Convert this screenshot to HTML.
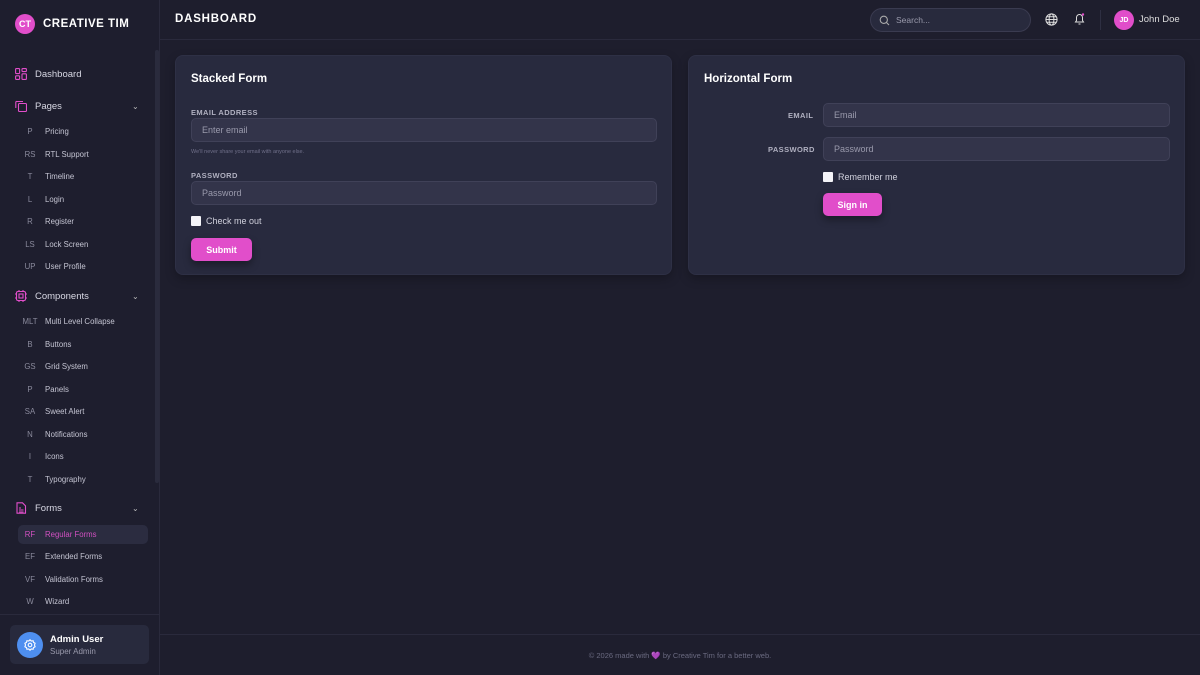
<!DOCTYPE html>
<html><head><meta charset="utf-8"><style>
*{box-sizing:border-box;margin:0;padding:0}
body{width:1200px;height:675px;overflow:hidden;background:#1e1e2d;font-family:"Liberation Sans",sans-serif;color:#e8e8f0;position:relative}
.sb{position:absolute;left:0;top:0;width:160px;height:675px;background:#1e1e2e;border-right:1px solid #2a2a3c}
.logo{position:absolute;left:15px;top:14px;display:flex;align-items:center}
.lc{width:20px;height:20px;border-radius:50%;background:#e14eca;color:#fff;font-size:9px;font-weight:bold;display:flex;align-items:center;justify-content:center}
.lt{margin-left:8px;font-size:11.5px;font-weight:bold;letter-spacing:.5px;color:#fff}
.sc{position:absolute;left:155px;top:50px;width:4px;height:433px;background:#2a2b3d;border-radius:2px}
.it{position:absolute;left:0;width:150px;font-size:9.5px;color:#d8d8e4;display:flex;align-items:center}
.it svg{position:absolute;left:15px}
.it .t{position:absolute;left:35px}
.it .ch{position:absolute;left:132px;font-size:8px;color:#bbb}
.sub{position:absolute;left:18px;width:130px;height:19px;font-size:7.8px;color:#c4c4d2;display:flex;align-items:center;border-radius:5px}
.sub .a{width:24px;text-align:center;color:#8a8a9c}
.sub .b{position:absolute;left:27px}
.sub.on{background:#2b2c40}
.sub.on .a,.sub.on .b{color:#d050c0}
.sf{position:absolute;left:0;top:614px;width:159px;border-top:1px solid #2a2a3c}
.adm{position:absolute;left:10px;top:625px;width:139px;height:39px;background:#282a3d;border-radius:5px}
.av{position:absolute;left:7px;top:7px;width:26px;height:26px;border-radius:50%;background:#4e8ff0;display:flex;align-items:center;justify-content:center}
.hd{position:absolute;left:160px;top:0;width:1040px;height:40px;border-bottom:1px solid #2a2a3c}
.card{position:absolute;top:55px;height:220px;background:#282a3e;border-radius:8px;border:1px solid #2e3045;box-shadow:0 4px 10px rgba(0,0,0,.25)}
.ct{position:absolute;left:15px;top:17px;font-size:11.5px;font-weight:bold;color:#fff}
.lb{position:absolute;font-size:7.5px;font-weight:bold;color:#b0b0c0;letter-spacing:.4px}
.in{position:absolute;height:24px;background:#33344a;border:1px solid #404158;border-radius:5px;font-size:9px;color:#9a9aac;padding-left:10px;display:flex;align-items:center}
.cb{position:absolute;width:10px;height:10px;background:#f4f4f8;border-radius:1px}
.ctx{position:absolute;font-size:9px;color:#d0d0dc}
.btn{position:absolute;height:23px;background:#e14eca;border-radius:5px;color:#fff;font-size:9px;font-weight:bold;display:flex;align-items:center;justify-content:center;box-shadow:0 4px 8px rgba(0,0,0,.35)}
</style></head><body>
<div class="sb">
<div class="logo"><div class="lc">CT</div><div class="lt">CREATIVE TIM</div></div>
<div class="sc"></div>
<div class="it" style="top:67px;height:14px"><svg width="12" height="12" viewBox="0 0 12 12" fill="none" stroke="#e14eca" stroke-width="1.1"><rect x=".6" y=".6" width="4" height="5" rx=".8"/><rect x="7" y=".6" width="4.4" height="3" rx=".8"/><rect x=".6" y="7.8" width="4" height="3.6" rx=".8"/><rect x="7" y="5.8" width="4.4" height="5.6" rx=".8"/></svg><span class="t">Dashboard</span></div>
<div class="it" style="top:99px;height:14px"><svg width="12" height="12" viewBox="0 0 12 12" fill="none" stroke="#e14eca" stroke-width="1.1"><rect x="3.5" y="3.5" width="8" height="8" rx="1"/><path d="M8 1.5H2A.8.8 0 0 0 .8 2.3V8"/></svg><span class="t">Pages</span><span class="ch">⌄</span></div>
<div class="sub" style="top:122px"><span class="a">P</span><span class="b">Pricing</span></div>
<div class="sub" style="top:145px"><span class="a">RS</span><span class="b">RTL Support</span></div>
<div class="sub" style="top:167px"><span class="a">T</span><span class="b">Timeline</span></div>
<div class="sub" style="top:190px"><span class="a">L</span><span class="b">Login</span></div>
<div class="sub" style="top:212px"><span class="a">R</span><span class="b">Register</span></div>
<div class="sub" style="top:235px"><span class="a">LS</span><span class="b">Lock Screen</span></div>
<div class="sub" style="top:257px"><span class="a">UP</span><span class="b">User Profile</span></div>
<div class="it" style="top:289px;height:14px"><svg width="12" height="12" viewBox="0 0 12 12" fill="none" stroke="#e14eca" stroke-width="1.1"><rect x="1.5" y="1.5" width="9" height="9" rx="1.5"/><rect x="4" y="4" width="4" height="4"/><path d="M4 0v1.5M8 0v1.5M4 10.5V12M8 10.5V12M0 4h1.5M0 8h1.5M10.5 4H12M10.5 8H12"/></svg><span class="t">Components</span><span class="ch">⌄</span></div>
<div class="sub" style="top:312px"><span class="a">MLT</span><span class="b">Multi Level Collapse</span></div>
<div class="sub" style="top:335px"><span class="a">B</span><span class="b">Buttons</span></div>
<div class="sub" style="top:357px"><span class="a">GS</span><span class="b">Grid System</span></div>
<div class="sub" style="top:380px"><span class="a">P</span><span class="b">Panels</span></div>
<div class="sub" style="top:402px"><span class="a">SA</span><span class="b">Sweet Alert</span></div>
<div class="sub" style="top:425px"><span class="a">N</span><span class="b">Notifications</span></div>
<div class="sub" style="top:447px"><span class="a">I</span><span class="b">Icons</span></div>
<div class="sub" style="top:470px"><span class="a">T</span><span class="b">Typography</span></div>
<div class="it" style="top:501px;height:14px"><svg width="12" height="12" viewBox="0 0 12 12" fill="none" stroke="#e14eca" stroke-width="1.1"><path d="M2 .8h5.5L10.5 3.8V11.2H2z"/><path d="M4 6h2M4 8h4.5M4 10h4.5"/></svg><span class="t">Forms</span><span class="ch">⌄</span></div>
<div class="sub on" style="top:525px"><span class="a">RF</span><span class="b">Regular Forms</span></div>
<div class="sub" style="top:547px"><span class="a">EF</span><span class="b">Extended Forms</span></div>
<div class="sub" style="top:570px"><span class="a">VF</span><span class="b">Validation Forms</span></div>
<div class="sub" style="top:592px"><span class="a">W</span><span class="b">Wizard</span></div>
<div class="sf"></div>
<div class="adm"><div class="av"><svg width="12" height="12" viewBox="0 0 12 12" fill="none" stroke="#fff" stroke-width="1.1"><circle cx="6" cy="6" r="1.8"/><path d="M6 .8l1.3 1.2 1.8-.3.4 1.7 1.6.9-.6 1.7.6 1.7-1.6.9-.4 1.7-1.8-.3L6 11.2 4.7 10l-1.8.3-.4-1.7-1.6-.9.6-1.7-.6-1.7 1.6-.9.4-1.7 1.8.3z"/></svg></div>
<div style="position:absolute;left:40px;top:9px;font-size:9.5px;font-weight:bold;color:#fff">Admin User</div>
<div style="position:absolute;left:40px;top:22px;font-size:8px;color:#9a9aac">Super Admin</div></div>
</div>
<div class="hd">
<div style="position:absolute;left:15px;top:13px;font-size:11.5px;font-weight:bold;letter-spacing:.8px;color:#fff">DASHBOARD</div>
<div style="position:absolute;left:710px;top:8px;width:161px;height:24px;border-radius:12px;background:#282a3d;border:1px solid #3a3b50"><svg style="position:absolute;left:8px;top:6px" width="11" height="11" viewBox="0 0 11 11" fill="none" stroke="#aaa" stroke-width="1.1"><circle cx="4.8" cy="4.8" r="3.6"/><path d="M7.5 7.5L10 10"/></svg><span style="position:absolute;left:25px;top:6px;font-size:8.5px;color:#9a9aac">Search...</span></div>
<svg style="position:absolute;left:885px;top:13px" width="13" height="13" viewBox="0 0 13 13" fill="none" stroke="#ddd" stroke-width="1"><circle cx="6.5" cy="6.5" r="5.6"/><ellipse cx="6.5" cy="6.5" rx="2.4" ry="5.6"/><path d="M1 6.5h11M1.8 3.8h9.4M1.8 9.2h9.4"/></svg>
<svg style="position:absolute;left:913px;top:12px" width="13" height="14" viewBox="0 0 13 14" fill="none" stroke="#ddd" stroke-width="1"><path d="M2.5 10h8L9.5 8.5V5.5a3 3 0 0 0-6 0v3z"/><path d="M5.5 12h2"/><circle cx="10" cy="2.5" r="1.2" fill="#e14eca" stroke="none"/></svg>
<div style="position:absolute;left:940px;top:10px;width:1px;height:20px;background:#2e2f42"></div>
<div style="position:absolute;left:954px;top:10px;width:20px;height:20px;border-radius:50%;background:#e14eca;color:#fff;font-size:7px;font-weight:bold;display:flex;align-items:center;justify-content:center">JD</div>
<div style="position:absolute;left:979px;top:14px;font-size:9.5px;color:#ddd">John Doe</div>
</div>
<div class="card" style="left:175px;width:497px">
<div class="ct">Stacked Form</div>
<div class="lb" style="left:15px;top:52px">EMAIL ADDRESS</div>
<div class="in" style="left:15px;top:62px;width:466px">Enter email</div>
<div style="position:absolute;left:15px;top:93px;font-size:5.5px;color:#70708a">We'll never share your email with anyone else.</div>
<div class="lb" style="left:15px;top:115px">PASSWORD</div>
<div class="in" style="left:15px;top:125px;width:466px">Password</div>
<div class="cb" style="left:15px;top:160px"></div><div class="ctx" style="left:30px;top:160px">Check me out</div>
<div class="btn" style="left:15px;top:182px;width:61px">Submit</div>
</div>
<div class="card" style="left:688px;width:497px">
<div class="ct">Horizontal Form</div>
<div class="lb" style="left:99px;top:55px">EMAIL</div>
<div class="lb" style="left:79px;top:89px">PASSWORD</div>
<div class="in" style="left:134px;top:47px;width:347px">Email</div>
<div class="in" style="left:134px;top:81px;width:347px">Password</div>
<div class="cb" style="left:134px;top:116px"></div><div class="ctx" style="left:149px;top:116px">Remember me</div>
<div class="btn" style="left:134px;top:137px;width:59px">Sign in</div>
</div>
<div style="position:absolute;left:160px;top:634px;width:1040px;border-top:1px solid #2a2a3c"></div>
<div style="position:absolute;left:160px;top:651px;width:1040px;text-align:center;font-size:7.5px;color:#6a6a80">© 2026 made with 💜 by Creative Tim for a better web.</div>
</body></html>
